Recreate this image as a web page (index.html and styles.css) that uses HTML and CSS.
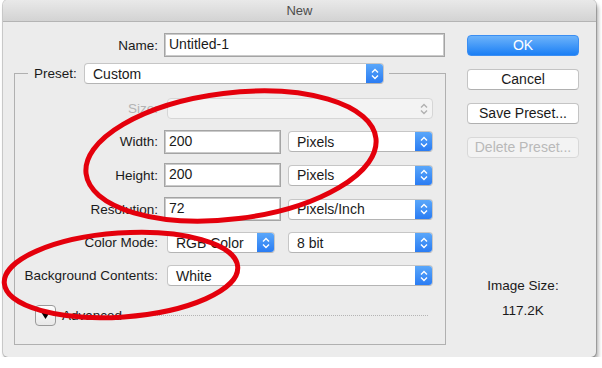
FILE: index.html
```html
<!DOCTYPE html>
<html lang="en">
<head>
  <meta charset="UTF-8">
  <title>New</title>
  <link rel="stylesheet" href="styles.css">
</head>
<body>

  <div class="window">
    <div class="titlebar">New</div>

    <div class="dialog">
      <div class="left">
        <div class="name-row">
          <label class="label">Name:</label>
          <div class="field name-field">Untitled-1</div>
        </div>

        <fieldset class="group">
          <legend>
            <span class="legend-label">Preset:</span>
            <div class="select preset-select">
              <span class="value">Custom</span>
              <span class="stepper"><svg width="8" height="12" viewBox="0 0 8 12"><path d="M1 4.5 L4 1.5 L7 4.5 M1 7.5 L4 10.5 L7 7.5"/></svg></span>
            </div>
          </legend>

          <div class="rows">
            <label class="label disabled">Size:</label>
            <div class="controls">
              <div class="select wide off">
                <span class="value"></span>
                <span class="stepper"><svg width="8" height="12" viewBox="0 0 8 12"><path d="M1 4.5 L4 1.5 L7 4.5 M1 7.5 L4 10.5 L7 7.5"/></svg></span>
              </div>
            </div>

            <label class="label">Width:</label>
            <div class="controls">
              <div class="field num">200</div>
              <div class="select unit">
                <span class="value">Pixels</span>
                <span class="stepper"><svg width="8" height="12" viewBox="0 0 8 12"><path d="M1 4.5 L4 1.5 L7 4.5 M1 7.5 L4 10.5 L7 7.5"/></svg></span>
              </div>
            </div>

            <label class="label">Height:</label>
            <div class="controls">
              <div class="field num">200</div>
              <div class="select unit">
                <span class="value">Pixels</span>
                <span class="stepper"><svg width="8" height="12" viewBox="0 0 8 12"><path d="M1 4.5 L4 1.5 L7 4.5 M1 7.5 L4 10.5 L7 7.5"/></svg></span>
              </div>
            </div>

            <label class="label">Resolution:</label>
            <div class="controls">
              <div class="field num">72</div>
              <div class="select unit">
                <span class="value">Pixels/Inch</span>
                <span class="stepper"><svg width="8" height="12" viewBox="0 0 8 12"><path d="M1 4.5 L4 1.5 L7 4.5 M1 7.5 L4 10.5 L7 7.5"/></svg></span>
              </div>
            </div>

            <label class="label">Color Mode:</label>
            <div class="controls">
              <div class="select mode">
                <span class="value">RGB Color</span>
                <span class="stepper"><svg width="8" height="12" viewBox="0 0 8 12"><path d="M1 4.5 L4 1.5 L7 4.5 M1 7.5 L4 10.5 L7 7.5"/></svg></span>
              </div>
              <div class="select unit bits">
                <span class="value">8 bit</span>
                <span class="stepper"><svg width="8" height="12" viewBox="0 0 8 12"><path d="M1 4.5 L4 1.5 L7 4.5 M1 7.5 L4 10.5 L7 7.5"/></svg></span>
              </div>
            </div>

            <label class="label">Background Contents:</label>
            <div class="controls">
              <div class="select wide">
                <span class="value">White</span>
                <span class="stepper"><svg width="8" height="12" viewBox="0 0 8 12"><path d="M1 4.5 L4 1.5 L7 4.5 M1 7.5 L4 10.5 L7 7.5"/></svg></span>
              </div>
            </div>
          </div>

          <div class="advanced">
            <span class="disclosure"><svg width="9" height="7" viewBox="0 0 9 7"><path d="M0 0 L9 0 L4.5 7 Z"/></svg></span>
            <span class="advanced-label">Advanced</span>
            <span class="rule"></span>
          </div>
        </fieldset>
      </div>

      <div class="right">
        <div class="button primary">OK</div>
        <div class="button">Cancel</div>
        <div class="button">Save Preset...</div>
        <div class="button disabled">Delete Preset...</div>

        <div class="image-size">
          <div>Image Size:</div>
          <div class="size-value">117.2K</div>
        </div>
      </div>
    </div>
  </div>

  <!-- annotation marks -->
  <svg class="marks" width="602" height="368" viewBox="0 0 602 368">
    <ellipse cx="231" cy="156" rx="146" ry="63" transform="rotate(-7 231 156)"/>
    <ellipse cx="121" cy="275" rx="117" ry="42" transform="rotate(-4 121 275)"/>
  </svg>

</body>
</html>
```

FILE: styles.css
```css
body {
  margin: 0;
  background: #fff;
  font-family: "Liberation Sans", Arial, sans-serif;
  font-size: 13.5px;
  color: #1a1a1a;
}

/* Window frame */
.window {
  margin-left: 3px;
  width: 593px;
  height: 357px;
  background: #ececec;
  border-radius: 5px;
  box-shadow: 0 0 0 1px rgba(0, 0, 0, 0.18), 2px 4px 4px rgba(0, 0, 0, 0.35);
  overflow: hidden;
}

.titlebar {
  height: 21px;
  line-height: 22px;
  text-align: center;
  font-size: 13px;
  color: #4d4d4d;
  background: linear-gradient(#e9e9e9, #d3d3d3);
  border-bottom: 1px solid #b4b4b4;
}

.dialog {
  display: flex;
  padding-left: 11px;
}

.left {
  width: 432px;
}

.right {
  width: 112px;
  margin-left: 21px;
  padding-top: 13px;
  display: flex;
  flex-direction: column;
  gap: 13px;
}

.label {
  text-align: right;
  white-space: nowrap;
}

.label.disabled {
  color: #b4b4b4;
}

/* Name */
.name-row {
  display: grid;
  grid-template-columns: 144px 1fr;
  column-gap: 6px;
  align-items: center;
  margin-top: 11px;
  padding-right: 1px;
}

.field {
  box-sizing: border-box;
  height: 24px;
  line-height: 20px;
  padding-left: 4px;
  background: #fff;
  border: 1px solid #a4a4a4;
  box-shadow: inset 0 0 0 1px #cacaca;
  font-size: 14px;
}

.num {
  width: 117px;
}

/* Preset group */
.group {
  margin: 6px 0 0 0;
  padding: 8px 12px 18px 0;
  border: 1px solid #b0b0b0;
  min-width: 0;
}

.group legend {
  margin-left: 13px;
  padding: 0 5px 0 6px;
  display: flex;
  align-items: center;
}

.legend-label {
  width: 46px;
  margin-right: 4px;
}

.select {
  box-sizing: border-box;
  height: 21px;
  display: flex;
  align-items: center;
  background: #fff;
  border: 1px solid #c6c6c6;
  border-bottom-color: #b4b4b4;
  border-radius: 4px;
  overflow: hidden;
  font-size: 14px;
}

.select .value {
  flex: 1;
  padding-left: 8px;
  white-space: nowrap;
}

.select .stepper {
  width: 17px;
  height: 100%;
  display: flex;
  align-items: center;
  justify-content: center;
  background: linear-gradient(#5aa7fa, #2a7cf3);
}

.select .stepper path {
  fill: none;
  stroke: #fff;
  stroke-width: 1.4;
}

.select.off {
  background: #f3f3f3;
  border-color: #d6d6d6;
}

.select.off .stepper {
  background: none;
}

.select.off .stepper path {
  stroke: #b0b0b0;
}

.preset-select {
  width: 300px;
}

.rows {
  display: grid;
  grid-template-columns: 143px 1fr;
  grid-template-rows: 33px 33px 34px 34px 33px 33px;
  column-gap: 6px;
  align-items: center;
}

.controls {
  display: flex;
  align-items: center;
}

.wide {
  width: 266px;
  margin-left: 3px;
}

.unit {
  width: 145px;
  margin-left: 7px;
}

.mode {
  width: 108px;
  margin-left: 3px;
}

.bits {
  margin-left: 13px;
}

/* Advanced */
.advanced {
  display: flex;
  align-items: center;
  margin: 13px 0 0 20px;
  height: 21px;
}

.disclosure {
  box-sizing: border-box;
  width: 21px;
  height: 21px;
  display: flex;
  align-items: center;
  justify-content: center;
  border: 1px solid #9a9a9a;
  border-radius: 4px;
  background: linear-gradient(#fdfdfd, #e8e8e8);
}

.advanced-label {
  margin-left: 6px;
}

.rule {
  width: 300px;
  margin-left: 6px;
  border-top: 1px dotted #b4b4b4;
}

/* Buttons */
.button {
  box-sizing: border-box;
  height: 21px;
  line-height: 19px;
  text-align: center;
  background: #fff;
  border: 1px solid #c4c4c4;
  border-bottom-color: #b0b0b0;
  border-radius: 4px;
  font-size: 14px;
}

.button.primary {
  color: #fff;
  background: linear-gradient(#6db3fa, #1b7ff5);
  border-color: #3b8ef2;
}

.button.disabled {
  color: #b9b9b9;
  background: #f3f3f3;
  border-color: #d8d8d8;
}

.image-size {
  margin-top: 107px;
  text-align: center;
  font-size: 13.5px;
}

.size-value {
  margin-top: 10px;
}

/* Red annotation */
.marks {
  position: absolute;
  top: 0;
  left: 0;
  pointer-events: none;
}

.marks ellipse {
  fill: none;
  stroke: #e4000c;
  stroke-width: 5;
}
```
